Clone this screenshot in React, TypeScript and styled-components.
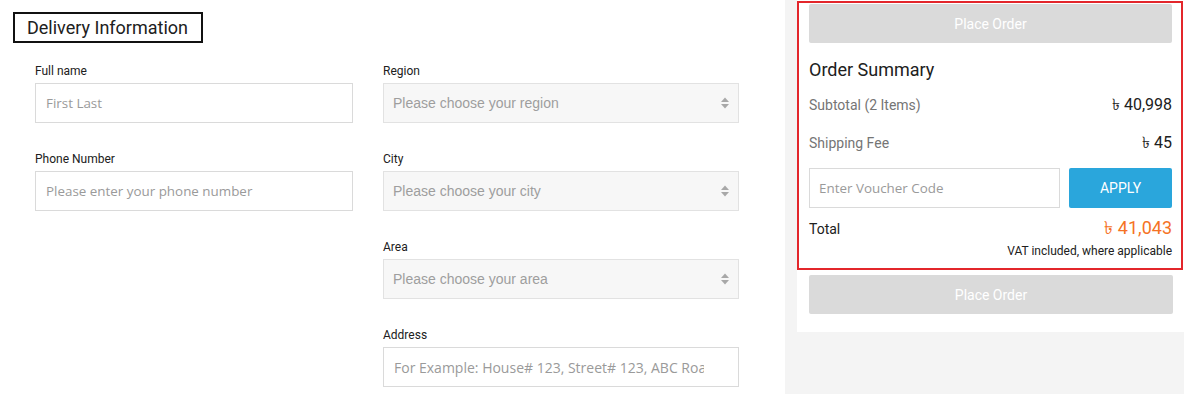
import React from "react";
import styled, { createGlobalStyle } from "styled-components";

const GlobalStyle = createGlobalStyle`
  html, body {
    margin: 0;
    padding: 0;
    background: #fff;
    font-family: Roboto, "Liberation Sans", Arial, sans-serif;
  }
  * { box-sizing: border-box; }
`;

const TAKA = "\u09F3";

const Page = styled.div`
  display: flex;
  min-height: 394px;
  width: 1184px;
`;

const Main = styled.main`
  width: 785px;
  padding: 12px 0 0 13px;
`;

const Heading = styled.h2`
  display: inline-block;
  margin: 0;
  height: 31px;
  width: 190px;
  border: 2px solid #111;
  padding: 0 0 0 12px;
  font-size: 18px;
  font-weight: 400;
  line-height: 27px;
  color: #202020;
`;

const FormGrid = styled.div`
  display: flex;
  gap: 30px;
  margin: 21px 0 0 22px;
`;

const Column = styled.div<{ $width: number }>`
  display: flex;
  flex-direction: column;
  gap: 29px;
  width: ${(p) => p.$width}px;
`;

const Field = styled.div`
  display: flex;
  flex-direction: column;
`;

const Label = styled.label`
  font-size: 12px;
  line-height: 14px;
  color: #202020;
  margin-bottom: 5px;
`;

const TextInput = styled.input<{ $wide?: boolean }>`
  height: 40px;
  width: 100%;
  border: 1px solid #dadada;
  background: #fff;
  padding: 0 ${(p) => (p.$wide ? "34px" : "10px")} 0 10px;
  font-family: "Open Sans", sans-serif;
  font-size: ${(p) => (p.$wide ? "14px" : "13.4px")};
  color: #333;
  outline: none;
  &::placeholder {
    color: #9a9a9a;
  }
`;

const SelectBox = styled.div`
  height: 40px;
  width: 100%;
  border: 1px solid #e2e2e2;
  background: #f7f7f7;
  display: flex;
  align-items: center;
  justify-content: space-between;
  padding: 0 8px 0 9px;
  font-family: "Liberation Sans", Arial, sans-serif;
  font-size: 14px;
  color: #9e9e9e;
`;

const Aside = styled.aside`
  flex: 1;
  background: #f4f4f4;
  padding-left: 12px;
`;

const Card = styled.section`
  background: #fff;
  padding: 1px 1px 18px 0;
`;

const Summary = styled.div`
  border: 2px solid #e3262b;
  padding: 1px 9px 10px 10px;
  display: flex;
  flex-direction: column;
`;

const PlaceOrder = styled.button<{ $outside?: boolean }>`
  height: 39px;
  width: ${(p) => (p.$outside ? "364px" : "100%")};
  margin: ${(p) => (p.$outside ? "5px 0 0 12px" : "0")};
  border: none;
  border-radius: 2px;
  background: #dadada;
  color: #fff;
  font-family: Roboto, sans-serif;
  font-size: 14px;
`;

const Title = styled.h3`
  margin: 16px 0 0;
  font-size: 18px;
  font-weight: 400;
  line-height: 22px;
  color: #202020;
`;

const Row = styled.div<{ $tall?: boolean }>`
  display: flex;
  justify-content: space-between;
  align-items: center;
  height: ${(p) => (p.$tall ? "38px" : "22px")};
`;

const Rows = styled.div`
  margin-top: 5px;
`;

const RowLabel = styled.span<{ $dark?: boolean }>`
  font-size: 14px;
  color: ${(p) => (p.$dark ? "#202020" : "#757575")};
`;

const Amount = styled.span<{ $total?: boolean }>`
  font-size: ${(p) => (p.$total ? "18px" : "16px")};
  color: ${(p) => (p.$total ? "#f57224" : "#202020")};
`;

const Voucher = styled.div`
  display: flex;
  gap: 9px;
  margin-top: 6px;
`;

const VoucherInput = styled(TextInput)`
  width: 251px;
  height: 40px;
  padding-left: 9px;
`;

const Apply = styled.button`
  flex: 1;
  height: 40px;
  border: none;
  border-radius: 2px;
  background: #2aa6dc;
  color: #fff;
  font-family: Roboto, sans-serif;
  font-size: 14px;
`;

const TotalRow = styled(Row)`
  margin-top: 10px;
`;

const Vat = styled.div`
  margin-top: 4px;
  text-align: right;
  font-size: 12px;
  line-height: 14px;
  color: #202020;
`;

const Arrows = () => (
  <svg width="10" height="14" viewBox="0 0 10 14">
    <path d="M1 6 L5 1.5 L9 6 Z" fill="#a8a8a8" />
    <path d="M1 8 L5 12.5 L9 8 Z" fill="#a8a8a8" />
  </svg>
);

const Select = ({ text }: { text: string }) => (
  <SelectBox>
    <span>{text}</span>
    <Arrows />
  </SelectBox>
);

export default function App() {
  return (
    <>
      <GlobalStyle />
      <Page>
        <Main>
          <Heading>Delivery Information</Heading>
          <FormGrid>
            <Column $width={318}>
              <Field>
                <Label>Full name</Label>
                <TextInput placeholder="First Last" />
              </Field>
              <Field>
                <Label>Phone Number</Label>
                <TextInput placeholder="Please enter your phone number" />
              </Field>
            </Column>
            <Column $width={356}>
              <Field>
                <Label>Region</Label>
                <Select text="Please choose your region" />
              </Field>
              <Field>
                <Label>City</Label>
                <Select text="Please choose your city" />
              </Field>
              <Field>
                <Label>Area</Label>
                <Select text="Please choose your area" />
              </Field>
              <Field>
                <Label>Address</Label>
                <TextInput $wide placeholder="For Example: House# 123, Street# 123, ABC Road" />
              </Field>
            </Column>
          </FormGrid>
        </Main>
        <Aside>
          <Card>
            <Summary>
              <PlaceOrder>Place Order</PlaceOrder>
              <Title>Order Summary</Title>
              <Rows>
                <Row $tall>
                  <RowLabel>Subtotal (2 Items)</RowLabel>
                  <Amount>{TAKA} 40,998</Amount>
                </Row>
                <Row $tall>
                  <RowLabel>Shipping Fee</RowLabel>
                  <Amount>{TAKA} 45</Amount>
                </Row>
              </Rows>
              <Voucher>
                <VoucherInput placeholder="Enter Voucher Code" />
                <Apply>APPLY</Apply>
              </Voucher>
              <TotalRow>
                <RowLabel $dark>Total</RowLabel>
                <Amount $total>{TAKA} 41,043</Amount>
              </TotalRow>
              <Vat>VAT included, where applicable</Vat>
            </Summary>
            <PlaceOrder $outside>Place Order</PlaceOrder>
          </Card>
        </Aside>
      </Page>
    </>
  );
}
